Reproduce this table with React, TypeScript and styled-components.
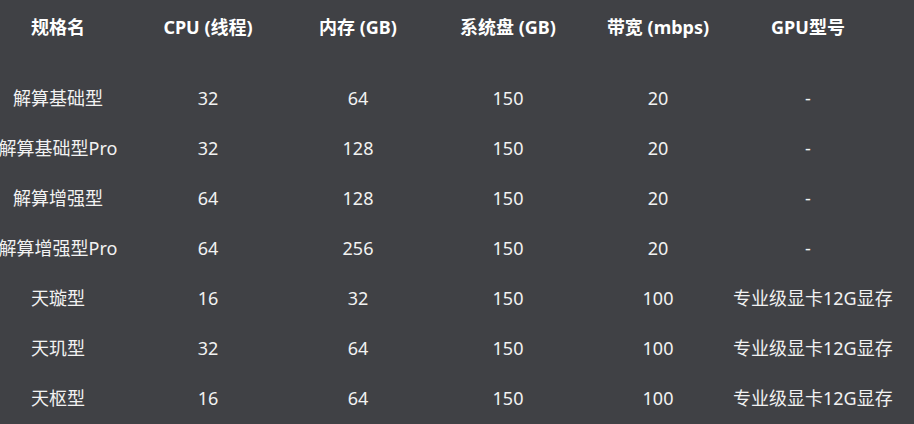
import React from 'react';
import styled, { createGlobalStyle } from 'styled-components';

const GlobalStyle = createGlobalStyle`
  html, body {
    margin: 0;
    padding: 0;
    background-color: #404145;
  }

  body {
    font-family: "Noto Sans", "Noto Sans CJK SC", sans-serif;
    color: #ffffff;
    overflow: hidden;
  }
`;

const TableWrap = styled.div`
  width: 914px;
  height: 424px;
  overflow: hidden;
`;

const SpecTable = styled.div`
  margin-left: -17px;
  width: 900px;
`;

const Row = styled.div<{ head?: boolean }>`
  display: grid;
  grid-template-columns: repeat(6, 150px);
  height: ${props => (props.head ? '54px' : '50px')};
  margin-bottom: ${props => (props.head ? '19px' : '0')};
  align-items: center;
`;

const Cell = styled.div<{ head?: boolean }>`
  font-size: 18px;
  font-weight: ${props => (props.head ? 700 : 400)};
  color: ${props => (props.head ? '#ffffff' : '#f2f2f2')};
  text-align: center;
  white-space: nowrap;
  line-height: 24px;
`;

const headers = ['规格名', 'CPU (线程)', '内存 (GB)', '系统盘 (GB)', '带宽 (mbps)', 'GPU型号'];

const specs: string[][] = [
  ['解算基础型', '32', '64', '150', '20', '-'],
  ['解算基础型Pro', '32', '128', '150', '20', '-'],
  ['解算增强型', '64', '128', '150', '20', '-'],
  ['解算增强型Pro', '64', '256', '150', '20', '-'],
  ['天璇型', '16', '32', '150', '100', '专业级显卡12G显存'],
  ['天玑型', '32', '64', '150', '100', '专业级显卡12G显存'],
  ['天枢型', '16', '64', '150', '100', '专业级显卡12G显存'],
];

const App: React.FC = () => {
  return (
    <>
      <GlobalStyle />
      <TableWrap>
        <SpecTable>
          <Row head>
            {headers.map(h => (
              <Cell head key={h}>{h}</Cell>
            ))}
          </Row>
          {specs.map(row => (
            <Row key={row[0]}>
              {row.map((v, i) => (
                <Cell key={i}>{v}</Cell>
              ))}
            </Row>
          ))}
        </SpecTable>
      </TableWrap>
    </>
  );
};

export default App;
